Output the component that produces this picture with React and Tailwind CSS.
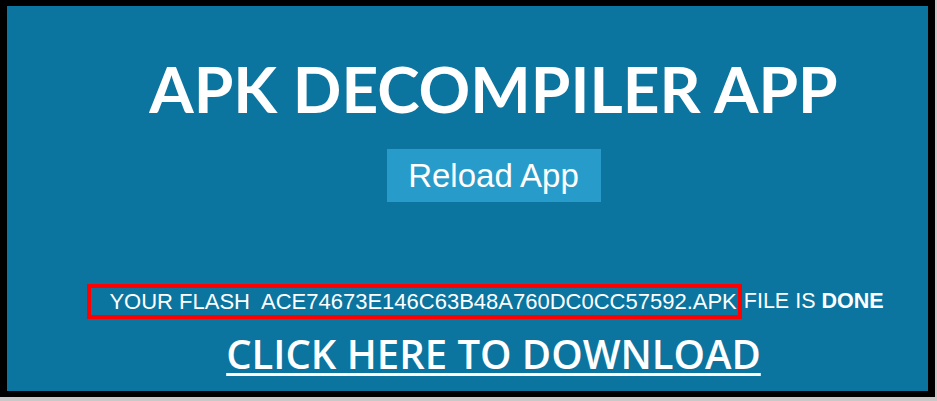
import React from 'react';

export default function App() {
  return (
    <div className="w-[937px] h-[401px] bg-[#c9c9c9] overflow-hidden">
      <div className="w-[935px] h-[397px] bg-black pt-[6px] pl-[7px] pr-[7px] pb-[6px]">
        <div className="h-full bg-[#0b75a0] flex flex-col items-center pl-[52px]">
          <h1 className="mt-[47px] text-[64px] leading-[72px] font-bold text-white font-['Lato','Open_Sans',sans-serif]">
            APK DECOMPILER APP
          </h1>
          <button className="mt-[24px] w-[214px] h-[53px] bg-[#279ccb] text-white text-[33px] font-['Liberation_Sans',Arial,sans-serif]">
            Reload App
          </button>
          <p className="mt-[82px] text-white text-[22px] leading-[23px] font-['Liberation_Sans',Arial,sans-serif] whitespace-pre flex items-center -ml-[16px]">
            <span className="border-[4px] border-[#ff0000] pl-[18px] pr-[1px] py-[2px]">
              YOUR FLASH  ACE74673E146C63B48A760DC0CC57592.APK
            </span>
            <span className="ml-[2px] text-[21.5px]">FILE IS <b>DONE</b></span>
          </p>
          <a href="#" className="mt-[12px] text-white text-[40px] leading-[46px] font-semibold underline underline-offset-[4px] decoration-[3px] font-['Open_Sans',sans-serif]">
            CLICK HERE TO DOWNLOAD
          </a>
        </div>
      </div>
    </div>
  );
}
